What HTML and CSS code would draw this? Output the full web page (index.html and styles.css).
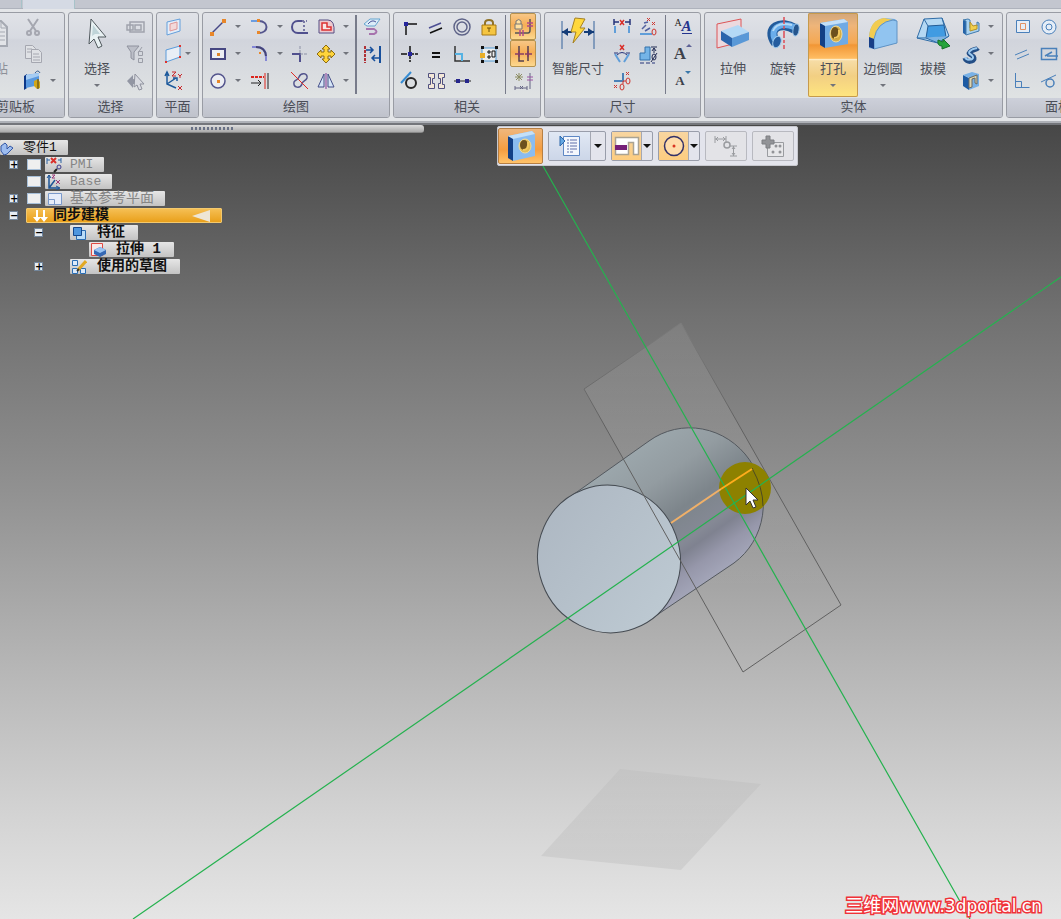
FILE: index.html
```html
<!DOCTYPE html>
<html lang="zh-CN">
<head>
	<meta charset="utf-8">
	<title>零件1</title>
	<link rel="stylesheet" href="styles.css">
</head>
<body>
<header class="ribbon">
	<div class="tabs"><span class="tab"></span><span class="tab current"></span></div>
	<div class="groups">
		<section class="group first">
			<div class="tools">
				<button class="big off"><svg width="34" height="34"><path d="M9 5h14l6 6v19H9z" fill="#e2e4e8" stroke="#a5a9b2" stroke-width="2"/><path d="M23 5v7h6M19 16h8M19 20h8M19 24h8" fill="none" stroke="#a5a9b2"/></svg><span>粘贴</span></button>
				<div class="grid">
					<button class="tool" aria-label="剪切"><svg width="24" height="24"><g fill="none" stroke="#a5a7b0" stroke-width="2"><path d="M7 4l8 12M17 4L9 16"/><circle cx="8" cy="18" r="2"/><circle cx="16" cy="18" r="2"/></g></svg></button>
					<button class="tool" aria-label="复制"><svg width="24" height="24"><g fill="#dfe1e5" stroke="#a5a7b0"><path d="M4.500 3.500h7l3 3v10h-10z"/><path d="M10.500 7.500h7l3 3v10h-10z"/><path d="M12 12h6M12 15h7M12 18h7M6 7h5M6 10h4"/></g></svg></button>
					<button class="tool drop" aria-label="格式"><svg width="24" height="24"><path d="M3 7l3-2v14l-3 2z" fill="#0c3788"/><path d="M5 6l13-2v12L5 19z" fill="#5898df"/><path d="M5 6l13-2v3L5 11z" fill="#a5ccf3"/><path d="M14 4q3-4 5 0" fill="none" stroke="#345d91"/><path d="M13 12l4-2 2 3v6l-3 1-3-3z" fill="#d3a719"/><path d="M17 10v10" stroke="#493f17"/></svg></button>
				</div>
			</div>
			<h2>剪贴板</h2>
		</section>
		<section class="group">
			<div class="tools">
				<button class="big"><svg width="34" height="34"><path d="M11 3l15 18-8 0 4 9-4 2-4-9-5 5z" fill="#e8f1f3" stroke="#50585d"/><path d="M13 9l7 9h-5l-3 2z" fill="#bfd4d8"/></svg><span>选择</span><i class="caret"></i></button>
				<div class="grid">
					<button class="tool" aria-label="选择框"><svg width="24" height="24"><g fill="none" stroke="#a0a3ad" stroke-width="1.500"><path d="M7 7h14v10H7z"/><path d="M4 10h6v5H4zM12 10h6v5h-6z"/></g></svg></button>
					<button class="tool" aria-label="过滤器"><svg width="24" height="24"><path d="M4 4h12l-5 6v8l-3-2v-6z" fill="#bcbfc8" stroke="#8f929e"/><path d="M19 5l-4 6M15.500 9.500h4v4h-4zM15.500 16.500h4v4h-4z" fill="none" stroke="#9a9da7"/></svg></button>
					<button class="tool" aria-label="反选"><svg width="24" height="24"><path d="M4 12l6-6v4c4 0 5 3 5 8-2-3-3-3-5-3v4z" fill="#9296a3"/><path d="M12 5l9 10h-4l2 5-3 1-2-5-3 2z" fill="#d9dbe1" stroke="#8f929e"/></svg></button>
				</div>
			</div>
			<h2>选择</h2>
		</section>
		<section class="group">
			<div class="tools">
				<div class="grid">
					<button class="tool" aria-label="平行平面"><svg width="24" height="24"><path d="M6 7l13-3v12L6 20z" fill="#e3edf9" stroke="#659fdb"/><path d="M9 9l7-2v7l-7 2z" fill="#f2d9da" stroke="#df9696"/></svg></button>
					<button class="tool drop snug" aria-label="三点平面"><svg width="24" height="24"><path d="M5 8l14-4v11L5 20z" fill="#e8eef6" stroke="#5b9bda"/><path d="M18 3h2v2h-2zM18 14h2v2h-2zM4 19h2v2H4z" fill="#e0322c"/></svg></button>
					<button class="tool" aria-label="坐标系"><svg width="24" height="24"><path d="M6 4v11l9 4M6 15l9-6M4 7l2-4 2 4M12 9h4v3" fill="none" stroke="#1e5a9c" stroke-width="1.500"/><path d="M11 3h4l-4 4h4M17 5l2 2 2-2M19 7v2M17 17l4 4M21 17l-4 4" fill="none" stroke="#c9292c"/></svg></button>
				</div>
			</div>
			<h2>平面</h2>
		</section>
		<section class="group">
			<div class="tools sketch">
				<div class="grid draw">
					<button class="tool drop" aria-label="直线"><svg width="24" height="24"><path d="M6 18L18 6" stroke="#474885" stroke-width="1.500"/><path d="M4 17h4v4H4zM16 4h4v4h-4z" fill="#e8872a"/></svg></button>
					<button class="tool drop" aria-label="圆弧"><svg width="24" height="24"><path d="M3 6h9" stroke="#6c9de0" stroke-width="2"/><path d="M11 6c10 0 10 12 0 12" fill="none" stroke="#54558d" stroke-width="2"/><path d="M9 4h3v3H9zM9 16h3v3H9z" fill="#e8872a"/></svg></button>
					<button class="tool" aria-label="修剪"><svg width="24" height="24"><path d="M20 18H10c-8 0-8-12 0-12h4" fill="none" stroke="#50508e" stroke-width="2"/><path d="M14 6h5M16 6v12" stroke="#7777a4" stroke-dasharray="2 2" stroke-width="2"/></svg></button>
					<button class="tool drop" aria-label="偏置"><svg width="24" height="24"><path d="M5 5h9q7 0 6 13H5z" fill="#edc9cf" stroke="#554e84"/><path d="M8 15V8h5v4h4v3z" fill="#f8e7e7" stroke="#dc3032" stroke-width="1.500"/></svg></button>
					<button class="tool drop" aria-label="矩形"><svg width="24" height="24"><path d="M5 7h14v10H5z" fill="#eceef3" stroke="#464782" stroke-width="2"/><path d="M11 11h3v3h-3z" fill="#dc852c"/></svg></button>
					<button class="tool drop" aria-label="圆角"><svg width="24" height="24"><path d="M4 5h4q10 0 10 10v4" fill="none" stroke="#8487d6" stroke-width="2"/><path d="M8 5q9 0 10 9" fill="none" stroke="#454577" stroke-width="2"/><path d="M11 10h2v2h-2z" fill="#e8872a"/></svg></button>
					<button class="tool" aria-label="延伸"><svg width="24" height="24"><path d="M4 12h8v8" fill="none" stroke="#50508e" stroke-width="2"/><path d="M12 4v8h8" fill="none" stroke="#8d91a6" stroke-dasharray="3 1"/></svg></button>
					<button class="tool drop" aria-label="移动"><svg width="24" height="24"><path d="M12 3l4 4h-2v3h3V8l4 4-4 4v-2h-3v3h2l-4 4-4-4h2v-3H7v2l-4-4 4-4v2h3V7H8z" fill="#ffd43b" stroke="#8b6b12"/></svg></button>
					<button class="tool drop" aria-label="圆"><svg width="24" height="24"><circle cx="12" cy="12" r="7" fill="#eceef3" stroke="#54558d" stroke-width="1.500"/><path d="M11 11h3v3h-3z" fill="#e8872a"/></svg></button>
					<button class="tool" aria-label="延伸到"><svg width="24" height="24"><path d="M3 8h13" stroke="#db251c" stroke-width="2" stroke-dasharray="3 1"/><path d="M3 14h10M10 11l3 3-3 3M20 4v16" fill="none" stroke="#222"/><path d="M17 4v16" stroke="#db251c"/></svg></button>
					<button class="tool" aria-label="分割"><svg width="24" height="24"><path d="M6 13c1-2 4-2 5-5 2-5 9-4 8 1-1 3-5 3-5 6-2 5-9 4-8-2z" fill="none" stroke="#54558d" stroke-width="1.500"/><path d="M3 3l17 17" stroke="#df2b27"/></svg></button>
					<button class="tool drop" aria-label="镜像"><svg width="24" height="24"><path d="M4 18h6V5zM20 18h-6V5z" fill="#d5e6f7" stroke="#434d88"/><path d="M12 4v16" stroke="#853899"/></svg></button>
				</div>
				<hr class="dark">
				<div class="grid">
					<button class="tool" aria-label="投影"><svg width="24" height="24"><path d="M4 9l6-5h10l-5 7H7z" fill="#dcecf8" stroke="#67a5cf"/><path d="M8 9q4-5 8-2" fill="none" stroke="#4b5599"/><path d="M6 14h8q5 3 0 5H9" fill="none" stroke="#a773ad" stroke-width="2"/></svg></button>
					<button class="tool" aria-label="间距"><svg width="24" height="24"><path d="M5 4v17" stroke="#b03137" stroke-width="2" stroke-dasharray="3 1"/><path d="M20 4v17" stroke="#174f9c" stroke-width="2"/><path d="M6 8h7M10 5l3 3-3 3M19 16h-7M15 13l-3 3 3 3" fill="none" stroke="#174f9c" stroke-width="1.500"/></svg></button>
				</div>
			</div>
			<h2>绘图</h2>
		</section>
		<section class="group">
			<div class="tools">
				<div class="grid relate">
					<button class="tool" aria-label="连接"><svg width="24" height="24"><path d="M8 20V9h11" fill="none" stroke="#111" stroke-width="1.500"/><path d="M6 7h4v4H6z" fill="#26269c"/></svg></button>
					<button class="tool" aria-label="平行"><svg width="24" height="24"><path d="M5 13l12-5" stroke="#4c4e93" stroke-width="1.500"/><path d="M6 18l12-5" stroke="#111" stroke-width="1.500"/></svg></button>
					<button class="tool" aria-label="同心"><svg width="24" height="24"><g fill="none" stroke="#5f6488" stroke-width="1.500"><circle cx="12" cy="12" r="8"/><circle cx="12" cy="12" r="5"/></g></svg></button>
					<button class="tool" aria-label="锁定"><svg width="24" height="24"><path d="M9 11V8q0-3 4-3t4 3v3" fill="none" stroke="#917328" stroke-width="2"/><path d="M6 10h14v10H6z" fill="#f5c541" stroke="#a57817"/><path d="M13 13v4M11 13h4" stroke="#6f5008"/></svg></button>
					<button class="tool" aria-label="水平/竖直"><svg width="24" height="24"><path d="M3 12h17M12 4v16" stroke="#111" stroke-width="1.500" stroke-dasharray="6 1"/><path d="M10 10h4v4h-4z" fill="#26269c"/></svg></button>
					<button class="tool" aria-label="相等"><svg width="24" height="24"><path d="M8 11h8M8 15h8" stroke="#111" stroke-width="2"/></svg></button>
					<button class="tool" aria-label="垂直"><svg width="24" height="24"><path d="M5 4v15h15" fill="none" stroke="#333" stroke-width="1.500"/><path d="M5 12h7v7" fill="none" stroke="#55b2e3" stroke-width="2"/></svg></button>
					<button class="tool" aria-label="刚性组"><svg width="24" height="24"><path d="M6 6h14v13H6z" fill="#eee" stroke="#519bd6"/><path d="M5 4h3v3H5zM19 4h3v3h-3zM5 18h3v3H5zM19 18h3v3h-3z" fill="#111"/><path d="M12 9h2v2h-2zM16 9h3v6h-3zM12 14h2v2h-2z" fill="none" stroke="#111"/><path d="M4 11h5v5H4z" fill="#e9ae28"/></svg></button>
					<button class="tool" aria-label="相切"><svg width="24" height="24"><path d="M3 14L13 3" stroke="#368cd3" stroke-width="2"/><circle cx="13" cy="14" r="5" fill="none" stroke="#282828" stroke-width="2"/></svg></button>
					<button class="tool" aria-label="对称"><svg width="24" height="24"><path d="M4.500 4.500h6v5h-2v5h2v5h-6v-4h2v-7h-2zM20.500 4.500h-6v5h2v5h-2v5h6v-4h-2v-7h2z" fill="#f3e7d7" stroke="#50517f"/></svg></button>
					<button class="tool" aria-label="共线"><svg width="24" height="24"><path d="M4 12h17" stroke="#222"/><path d="M6 10h4v4H6zM15 10h4v4h-4z" fill="#26268c"/></svg></button>
				</div>
				<hr>
				<div class="grid">
					<button class="tool on" aria-label="保持关系"><svg width="24" height="24"><path d="M4 9h7v5H4zM5 9V6q3-3 5 0v3" fill="#ffe09f" stroke="#777"/><path d="M4 18h13q2 0 2-3V4" fill="none" stroke="#555" stroke-width="1.500"/><path d="M16 8h6M16 11h6M9 15v6M12 15v6" stroke="#b14b88" stroke-width="1.500"/></svg></button>
					<button class="tool on" aria-label="关系手柄"><svg width="24" height="24"><path d="M8 4v15h5M17 4v15" fill="none" stroke="#54404d" stroke-width="1.500"/><path d="M4 12h9M14 12h7M8 9v6M17 9v6" stroke="#863e66" stroke-width="1.500"/></svg></button>
					<button class="tool" aria-label="关系颜色"><svg width="24" height="24"><path d="M4 8h8M8 4v8M5 5l6 6M11 5l-6 6" stroke="#8c8d62"/><path d="M4 19h12M4 17v4M16 17v4M9 17l3 3M12 17l-3 3M19 4v16" stroke="#646584"/><path d="M16 8h6M16 11h6" stroke="#9b55a2"/></svg></button>
				</div>
			</div>
			<h2>相关</h2>
		</section>
		<section class="group">
			<div class="tools measure">
				<button class="big wide"><svg width="34" height="34"><path d="M1 5v28M33 5v28" stroke="#34639b"/><path d="M1 16h10M23 16h10" stroke="#153d78" stroke-width="2"/><path d="M1 16l6-4v8zM33 16l-6-4v8z" fill="#153d78"/><path d="M14 2l10 1-5 9h5L12 27l3-11h-5z" fill="#ffd83d" stroke="#a58123"/></svg><span>智能尺寸</span></button>
				<div class="grid dims">
					<button class="tool" aria-label="间距尺寸"><svg width="24" height="24"><path d="M4 4v6M20 4v6M4 7h5M15 7h5" stroke="#27347a" stroke-width="1.500"/><path d="M10 5l4 5M14 5l-4 5" stroke="#d9302b" stroke-width="1.500"/><path d="M5 11v7M19 11v7" stroke="#609ed9" stroke-width="2"/></svg></button>
					<button class="tool" aria-label="坐标尺寸"><svg width="24" height="24"><path d="M4 19h12" stroke="#609ed9" stroke-width="2"/><path d="M6 14l4-4M9 16l5-3M8 8l4-1" stroke="#5362a0" stroke-width="1.500"/><path d="M11 3l3 3M14 3l-3 3M16 7l3 3M19 7l-3 3" stroke="#cf3731"/><ellipse cx="18" cy="17" rx="2" ry="3" fill="none" stroke="#cf3731"/></svg></button>
					<button class="tool" aria-label="角度尺寸"><svg width="24" height="24"><path d="M10 3l4 5M14 3l-4 5" stroke="#d9302b" stroke-width="1.500"/><path d="M5 12l5 8M19 12l-5 8" stroke="#609ed9" stroke-width="2"/><path d="M4 11h4M16 11h4M7 13q5-5 10 0" fill="none" stroke="#27347a"/></svg></button>
					<button class="tool" aria-label="对称直径"><svg width="24" height="24"><path d="M4 11h5V5h5v13H4z" fill="#74b4e7" stroke="#3270ab"/><path d="M4 21h15" stroke="#27347a" stroke-dasharray="4 2"/><path d="M15 5h6M18 6v5M16 9l2-3 2 3M15 20l6-9" fill="none" stroke="#222c55"/><ellipse cx="18" cy="15" rx="2" ry="3" fill="none" stroke="#222c55"/></svg></button>
					<button class="tool" aria-label="尺寸轴"><svg width="24" height="24"><path d="M4 12h9V4" fill="none" stroke="#4a81b8" stroke-width="2"/><path d="M13 12v3M13 12h3" stroke="#cf3731"/><path d="M16 3l3 3M19 3l-3 3M4 16l3 3M7 16l-3 3" stroke="#cf3731"/><ellipse cx="18" cy="12" rx="2" ry="3" fill="none" stroke="#cf3731"/><ellipse cx="12" cy="18" rx="2" ry="3" fill="none" stroke="#cf3731"/></svg></button>
				</div>
				<hr>
				<div class="grid">
					<button class="tool letter" aria-label="文字样式"><sup>A</sup><em>A</em></button>
					<button class="tool letter" aria-label="增大字体"><b>A</b><i class="grow"></i></button>
					<button class="tool letter small" aria-label="减小字体"><b>A</b><i class="shrink"></i></button>
				</div>
			</div>
			<h2>尺寸</h2>
		</section>
		<section class="group">
			<div class="tools">
				<button class="big"><svg width="34" height="34"><path d="M1 8l24-5v23L1 32z" fill="#ecd9de" stroke="#dd5456"/><path d="M5 15l17-6 11 7-17 6z" fill="#b4d9f6"/><path d="M5 15l11 7v9L5 24z" fill="#2a65ad"/><path d="M16 22l17-6v8l-17 7z" fill="#5998d7"/></svg><span>拉伸</span></button>
				<button class="big"><svg width="34" height="34"><path d="M10 27C-1 12 15 4 29 13" fill="none" stroke="#225b9b" stroke-width="10"/><path d="M9 24C3 11 16 6 28 11" fill="none" stroke="#6aadeb" stroke-width="6"/><path d="M7 15C10 7 18 7 26 9" fill="none" stroke="#b4d9f6" stroke-width="2"/><ellipse cx="11" cy="26" rx="4" ry="6" fill="#235c9f" stroke="#a2cced" transform="rotate(20 11 26)"/><ellipse cx="30" cy="14" rx="3" ry="6" fill="#25558d" stroke="#91c0e9" transform="rotate(10 30 14)"/><path d="M18 1v32" stroke="#dd4b54" stroke-width="1.500" stroke-dasharray="7 2 3 2"/></svg><span>旋转</span></button>
				<button class="big on"><svg width="34" height="34"><path d="M4 7l5 2v23l-5-3z" fill="#123f85"/><path d="M4 7l24-4 4 3v22L9 32V9z" fill="#70aae4"/><path d="M4 7l24-4 4 3L9 10z" fill="#c4e0f8"/><ellipse cx="20" cy="18" rx="6" ry="8" fill="#d4ac43" stroke="#f2dc99"/><ellipse cx="19" cy="17" rx="4" ry="6" fill="#6c511e"/><path d="M18 22q6 0 5-8" fill="none" stroke="#f4cb62" stroke-width="2"/></svg><span>打孔</span><i class="caret"></i></button>
				<button class="big"><svg width="34" height="34"><path d="M3 32V20Q5 4 18 2l11 1 2 2v22L8 33z" fill="#76ade3"/><path d="M3 21Q4 4 18 2l9 2Q11 6 8 23z" fill="#f2cc51"/><path d="M8 33V23Q11 6 27 4l4 1v22z" fill="#91c4f0" stroke="#6093c4"/><path d="M3 21l5 2v10l-5-2z" fill="#173e87"/></svg><span>边倒圆</span><i class="caret"></i></button>
				<button class="big"><svg width="34" height="34"><path d="M8 3l18-1 7 18-11 7L1 22z" fill="#b4d8f3" stroke="#306ca6"/><path d="M12 10l16-1 2 12-20 1z" fill="#419be2" stroke="#235c96"/><path d="M1 22l9 0 12 5 11-7" fill="#7fb4e2" stroke="#306ca6"/><path d="M8 3l4 7M26 2l2 7" fill="none" stroke="#306ca6"/><path d="M22 24l5 2v-3l7 7-8 3v-3q-5 0-4-6z" fill="#25a33b" stroke="#176f29"/></svg><span>拔模</span></button>
				<div class="grid">
					<button class="tool drop" aria-label="肋板"><svg width="24" height="24"><path d="M4 5l3 1v14l-3-2z" fill="#2463a8"/><path d="M4 5l5-1 2 1v8l7-2V7l2 1v8L7 20V6z" fill="#a8d2f1" stroke="#427bad"/><path d="M11 12V7l3 4 4-1v4l-7 2z" fill="#f2cf4c" stroke="#b3922a"/></svg></button>
					<button class="tool drop" aria-label="扫掠"><svg width="24" height="24"><path d="M6 16c1 5 10 4 9 0s-7-3-4-6 6-2 8-4" fill="none" stroke="#234e86" stroke-width="5"/><path d="M6 15c1 4 9 3 8 0s-6-3-3-6 5-2 7-3" fill="none" stroke="#9ccaf0" stroke-width="2"/></svg></button>
					<button class="tool drop" aria-label="薄壁"><svg width="24" height="24"><path d="M4 6l6 3v12l-6-4z" fill="#1c5ba3"/><path d="M4 6l9-3 7 2v12l-10 4V9z" fill="#78b1e6"/><path d="M10 9l8-3v9l-2-1V9l-3 1v8l-3 1z" fill="#ddd4af" stroke="#6d6b61"/></svg></button>
				</div>
			</div>
			<h2>实体</h2>
		</section>
		<section class="group last">
			<div class="tools">
				<div class="grid dims">
					<button class="tool" aria-label="共面"><svg width="24" height="24"><path d="M5.500 5.500h13v12h-13z" fill="#e5edf7" stroke="#4a80ba"/><path d="M9.500 8.500h5v6h-5z" fill="none" stroke="#e19164"/></svg></button>
					<button class="tool" aria-label="同轴"><svg width="24" height="24"><g fill="#e5edf7" stroke="#4a80ba"><circle cx="12" cy="12" r="7"/><circle cx="12" cy="12" r="3"/></g></svg></button>
					<button class="tool" aria-label="面平行"><svg width="24" height="24"><path d="M4 13l12-5M6 17l12-5" stroke="#4a80ba"/></svg></button>
					<button class="tool" aria-label="面相等"><svg width="24" height="24"><path d="M4.500 6.500h15v11h-15zM8 14l7-4M10 14h11" fill="none" stroke="#4a80ba" stroke-width="1.500"/></svg></button>
					<button class="tool" aria-label="面垂直"><svg width="24" height="24"><path d="M4.500 4v14.500h14M4.500 12.500h6v6" fill="none" stroke="#4a80ba"/></svg></button>
					<button class="tool" aria-label="面相切"><svg width="24" height="24"><path d="M4 13l15-7" stroke="#4a80ba"/><circle cx="13" cy="14" r="4" fill="none" stroke="#4a80ba" stroke-width="1.500"/></svg></button>
				</div>
			</div>
			<h2>面相关</h2>
		</section>
	</div>
</header>
<main class="view">
	<svg class="scene" viewBox="0 125 1061 794" preserveAspectRatio="xMidYMin slice">
		<defs>
			<linearGradient id="body" gradientUnits="userSpaceOnUse" x1="608" y1="470" x2="692" y2="590">
				<stop offset="0" stop-color="#9ba6ab"/>
				<stop offset=".25" stop-color="#939ca1"/>
				<stop offset=".5" stop-color="#7d858b"/>
				<stop offset=".7" stop-color="#858995"/>
				<stop offset=".76" stop-color="#7f8290"/>
				<stop offset=".88" stop-color="#9697aa"/>
				<stop offset="1" stop-color="#a2a4b7"/>
			</linearGradient>
			<linearGradient id="face" x1="0" y1="0" x2=".6" y2="1">
				<stop offset="0" stop-color="#acb6c1"/>
				<stop offset="1" stop-color="#bcc8d1"/>
			</linearGradient>
			<linearGradient id="edge" gradientUnits="userSpaceOnUse" x1="0" y1="323" x2="0" y2="430">
				<stop offset="0" stop-color="#7c7c7c"/>
				<stop offset="1" stop-color="#606060"/>
			</linearGradient>
			<linearGradient id="sheet" gradientUnits="userSpaceOnUse" x1="0" y1="323" x2="0" y2="600">
				<stop offset="0" stop-color="#fff" stop-opacity=".09"/>
				<stop offset="1" stop-color="#fff" stop-opacity="0"/>
			</linearGradient>
			<linearGradient id="shade" x1="0" y1="0" x2="0" y2="1">
				<stop offset="0" stop-color="#000" stop-opacity=".03"/>
				<stop offset="1" stop-color="#000" stop-opacity=".06"/>
			</linearGradient>
		</defs>
		<!-- ground shadow -->
		<path d="M620 769l141 15-80 86-140-14z" fill="url(#shade)"/>
		<path d="M681 323l160 282-98 67-159-283z" fill="url(#sheet)"/>
		<!-- cylinder -->
		<path d="M567 499L649 441A71 74 -20 0 1 734 563L651 619z" fill="url(#body)"/>
		<path d="M567 499L649 441A71 74 -20 0 1 734 563L651 619" fill="none" stroke="#54595f"/>
		<ellipse cx="609" cy="559" rx="71" ry="74" transform="rotate(-20 609 559)" fill="url(#face)" stroke="#454b52"/>
		<path d="M681 323l160 282-98 67-159-283z" fill="none" stroke="url(#edge)"/>
		<circle cx="745" cy="488" r="26" fill="#8d8100"/>
		<path d="M752 468q11 20 11 38" fill="none" stroke="#4c4a22"/>
		<path d="M543 166L970 919M1061 277L133 919" stroke="#25b24f" stroke-width="1.200"/>
		<path d="M671 523l50-34" stroke="#f0b068" stroke-width="2"/>
		<path d="M721 489l31-20" stroke="#ffac1c" stroke-width="2"/>
		<path d="M746 488v17l4-4 3 7 3-1-3-7h5z" fill="#fff" stroke="#333"/>
	</svg>
	<div class="splitter"><i></i></div>
	<ul class="tree">
		<li class="row root"><span class="label"><svg width="16" height="16"><path d="M1 6l4-3 2 2v4l3-3 3 2-6 6-3 1-3-4z" fill="#9dbdf0" stroke="#3457a4"/></svg>零件1</span></li>
		<li class="row"><button class="fold" aria-label="展开">+</button><input type="checkbox" aria-label="PMI"><span class="label grey latin"><svg width="16" height="16"><path d="M1 1v6M15 1v5M1 3h3M12 3h3" stroke="#2c64a4"/><path d="M5 1l5 5M10 1L5 6" stroke="#d9302b" stroke-width="2"/><circle cx="13" cy="10" r="2" fill="none" stroke="#3a3b8c"/><path d="M8 15l3-3" stroke="#222" stroke-width="2"/></svg>PMI</span></li>
		<li class="row"><i class="fold none"></i><input type="checkbox" aria-label="Base"><span class="label grey latin"><svg width="16" height="16"><path d="M3 1v13h10M3 14l6-8" fill="none" stroke="#1d5496" stroke-width="1.500"/><path d="M1 4l2-3 2 3M10 12l4 2-4 2" fill="none" stroke="#1d5496"/><path d="M6 1h3L6 4h3M10 6l4 4M14 6l-4 4" fill="none" stroke="#9b3a78"/></svg>Base</span></li>
		<li class="row"><button class="fold" aria-label="展开">+</button><input type="checkbox" aria-label="基本参考平面"><span class="label grey"><svg width="16" height="16"><path d="M2.500 2.500h13v11h-13zM2.500 8.500h6v5" fill="#e6edfa" stroke="#7b9acb"/></svg>基本参考平面</span></li>
		<li class="row"><button class="fold" aria-label="折叠">−</button><span class="label sync"><svg width="16" height="16"><path d="M5 2v9M12 2v9" stroke="#fff" stroke-width="2"/><path d="M1 9h8l-4 5zM8 9h8l-4 5z" fill="#fff"/></svg>同步建模<i class="arrow"></i></span></li>
		<li class="row sub"><button class="fold" aria-label="折叠">−</button><span class="label strong"><svg width="16" height="16"><path d="M5.500 5.500h9v9h-9z" fill="#b9dcf8" stroke="#2c6db2"/><path d="M2.500 2.500h8v8h-8z" fill="#4d96df" stroke="#14478e"/></svg>特征</span></li>
		<li class="row leaf"><span class="label strong"><svg width="16" height="16"><path d="M1.500 1.500h11v12h-11z" fill="#f8e8e8" stroke="#e04a43"/><path d="M4 8l6-3 6 3v4l-6 3-6-3z" fill="#3468b4"/><path d="M4 8l6-3 6 3-6 3z" fill="#99c3f2"/></svg>拉伸 1</span></li>
		<li class="row sub"><button class="fold" aria-label="展开">+</button><span class="label strong"><svg width="16" height="16"><path d="M1.500 1.500h5v5h-5zM1.500 9.500h5v5h-5zM9.500 9.500h5v5h-5z" fill="#dceafa" stroke="#2a6eb5"/><path d="M7 11l8-9" stroke="#e2a923" stroke-width="3"/><path d="M6 12l2-2" stroke="#333" stroke-width="2"/></svg>使用的草图</span></li>
	</ul>
	<div class="command">
		<button class="hole" aria-label="打孔"><svg width="34" height="34"><path d="M4 7l5 2v23l-5-3z" fill="#123f85"/><path d="M4 7l24-5 3 3v22L9 32V9z" fill="#8abcf0"/><path d="M4 7l24-5 3 3L9 10z" fill="#c4e0f8"/><ellipse cx="21" cy="17" rx="6" ry="7" fill="#e1bd59" stroke="#f2dc99"/><ellipse cx="20" cy="16" rx="4" ry="5" fill="#6c511e"/><path d="M19 21q6 0 5-8" fill="none" stroke="#f4cb62" stroke-width="2"/></svg></button>
		<button class="split options" aria-label="选项"><span><svg width="24" height="24"><path d="M5.500 2.500h16v19h-16z" fill="#f4f7fd" stroke="#5d87c4"/><path d="M2 2l5 5-5 5z" fill="#64a7e3" stroke="#2d66a8"/><path d="M9 6h10M9 9h10M9 12h10M9 15h10M9 18h6" stroke="#5e6fa9" stroke-dasharray="2 1 9 0"/></svg></span><i class="caret"></i></button>
		<button class="split warm" aria-label="范围"><span><svg width="26" height="24"><path d="M1.500 3.500h23v17h-5v-12h-5v12h-13z" fill="#fff" stroke="#aaa393" stroke-width="1.500"/><path d="M1 11h12v5H1z" fill="#762078"/></svg></span><i class="caret"></i></button>
		<button class="split warm" aria-label="孔型"><span><svg width="24" height="24"><circle cx="12" cy="12" r="9.500" fill="#ffdcaa" stroke="#333168" stroke-width="1.500"/><circle cx="12" cy="12" r="1.500" fill="#da3522"/></svg></span><i class="caret"></i></button>
		<button class="plain" aria-label="尺寸" disabled><svg width="28" height="24"><g fill="none" stroke="#9a9ca0"><path d="M3 2v7M14 2v7M3 5h11M6 3L4 5l2 2M11 3l2 2-2 2M18 12h7M18 22h7M21.500 12v10M20 15l1.500-2 1.500 2M20 19l1.500 2 1.500-2"/><circle cx="15" cy="11" r="3" stroke-width="1.500"/></g></svg></button>
		<button class="plain" aria-label="阵列" disabled><svg width="28" height="24"><path d="M8.500 8.500h16v14h-16z" fill="#e7e7e9" stroke="#9a9ca0"/><path d="M3 6h4V2h4v4h4v4h-4v4H7v-4H3z" fill="#929397" stroke="#7d7e82"/><g fill="#929397"><circle cx="17" cy="12" r="1.500"/><circle cx="21" cy="12" r="1.500"/><circle cx="21" cy="18" r="1.500"/><circle cx="14" cy="18" r="1.500"/></g></svg></button>
	</div>
	<p class="site">三维网<b>www.3dportal.cn</b></p>
</main>
</body>
</html>
```
FILE: styles.css
```css
*{
	margin:0;
	padding:0;
	box-sizing:border-box;
	list-style:none;
}
body{
	height:100vh;
	display:flex;
	flex-direction:column;
	overflow:hidden;
	font-family:"Liberation Sans","Noto Sans CJK SC",sans-serif;
	font-size:13px;
	color:#4b4e57;
}
button{
	font:inherit;
	color:inherit;
	background:none;
	border:0;
}
svg{
	display:block;
	flex:none;
}

/* ribbon */
.ribbon{
	flex:none;
	background:#dadde2;
	border-bottom:2px solid #74767b;
	overflow:hidden;
}
.tabs{
	display:flex;
	gap:1px;
	height:9px;
	background:#c3c6cf;
	border-bottom:1px solid #aeb2bc;
}
.tab{
	width:22px;
	border-right:1px solid #a7c3c9;
}
.tab.current{
	width:52px;
	height:9px;
	background:#d5dae4;
}
.groups{
	display:flex;
	gap:3px;
	padding:3px 0;
	border-bottom:2px solid #aeb1b7;
	background:#e3e5e8;
}
.group{
	flex:none;
	border:1px solid #999ca4;
	border-radius:3px;
	background:linear-gradient(#e0e2e7,#d7dae1 24%,#d1d4dc 26%,#dfe2e3 80%);
	overflow:hidden;
}
.group.first{
	margin-left:-34px;
}
.group.last{
	flex:1 0 117px;
}
.group h2{
	height:19px;
	line-height:18px;
	font-size:13px;
	font-weight:normal;
	text-align:center;
	background:linear-gradient(#cdd0da,#bfc2cb);
}
.tools{
	display:flex;
	height:85px;
	padding:0 4px 0 3px;
}
.tools.sketch,.tools.measure{
	padding-left:2px;
}
.grid{
	display:grid;
	grid-auto-rows:27px;
}
.draw{
	grid-template-columns:42px 40px 26px 40px;
}
.relate{
	grid-template-columns:repeat(4,26px);
}
.dims{
	grid-template-columns:26px 26px;
	justify-content:start;
}
.tools hr{
	width:1px;
	height:79px;
	margin:2px 4px 0;
	border:0;
	background:#777b8a;
}
.tools hr.dark{
	width:2px;
	margin:2px 2px 0;
}
.tool{
	width:26px;
	display:flex;
	align-items:center;
	padding:0 1px;
}
.tool.drop{
	width:40px;
}
.tool.drop::after,.caret{
	content:"";
	flex:none;
	border:3px solid transparent;
	border-top-color:#71747c;
	border-bottom-width:0;
}
.tool.drop::after{
	margin-left:5px;
}
.tool.snug{
	width:34px;
}
.tool.snug::after{
	margin-left:0;
}
.tool.on{
	border:1px solid #b5924e;
	border-radius:2px;
	background:linear-gradient(#f8c786,#f6ae56 45%,#fcd88f);
}
.tool.on svg{
	margin:0 -1px;
}
.big{
	width:50px;
	height:84px;
	display:flex;
	flex-direction:column;
	align-items:center;
	padding-top:3px;
	border-radius:2px;
}
.big span{
	margin-top:10px;
	line-height:18px;
	white-space:nowrap;
}
.big .caret{
	margin-top:6px;
}
.big.off{
	color:#8d9098;
}
.big.wide{
	width:62px;
}
.big.on{
	background:linear-gradient(#d2a67a,#eeb57a 15%,#f5a852 36%,#f19635 38%,#ffbd62 54%,#fff0cc 55%,#f6dca5 57%,#f2cf83 75%,#ffe67f);
	box-shadow:inset 0 0 0 1px #c69a4c;
}
.letter{
	justify-content:center;
	font-family:"Liberation Serif",serif;
	font-size:17px;
	color:#3d414a;
}
.letter sup{
	font-size:10px;
	line-height:10px;
	color:#222;
	align-self:flex-start;
	margin-top:5px;
}
.letter em{
	font-size:15px;
	line-height:14px;
	font-weight:bold;
	color:#24348d;
	border-bottom:1px solid #24348d;
}
.letter.small{
	font-size:13px;
}
.grow,.shrink{
	border:3px solid transparent;
	align-self:flex-start;
	margin-top:4px;
}
.grow{
	border-bottom-color:#5e6296;
	border-top:0;
}
.shrink{
	border-top-color:#3b78aa;
	border-bottom:0;
}

/* model view */
.view{
	flex:1;
	position:relative;
	overflow:hidden;
	background:linear-gradient(#474747,#717171 24%,#919191 46%,#b7b7b7 69%,#d2d2d2 86%,#e5e5e5);
}
.scene{
	position:absolute;
	left:0;
	top:0;
	width:100%;
	height:100%;
}
.splitter{
	position:relative;
	width:40%;
	height:8px;
	display:flex;
	align-items:center;
	justify-content:center;
	border-radius:0 3px 3px 0;
	background:linear-gradient(#ddd,#aaa);
	border-bottom:1px solid #888;
}
.splitter i{
	width:42px;
	height:3px;
	background:repeating-linear-gradient(90deg,#697185 0 2px,transparent 2px 4px);
}
.tree{
	position:relative;
	width:222px;
	padding-top:6px;
	font-family:"Liberation Mono","Noto Sans CJK SC",monospace;
	font-size:14px;
	color:#111;
}
.row{
	height:17px;
	display:flex;
	align-items:center;
	padding-left:9px;
}
.row.root{
	padding-left:0;
	font-size:13px;
}
.row.sub{
	padding-left:34px;
}
.row.leaf{
	padding-left:89px;
}
.fold{
	width:9px;
	height:9px;
	flex:none;
	margin-right:8px;
	font-family:"DejaVu Sans",sans-serif;
	font-size:10px;
	font-weight:bold;
	line-height:8px;
	text-align:center;
	color:#000;
	background:#e6ecf2;
	border:1px solid #73869b;
	line-height:7px;
}
.fold.none{
	background:none;
	border:0;
}
.sub .fold{
	margin-right:27px;
}
.row input{
	appearance:none;
	width:14px;
	height:11px;
	margin:0 4px 0 1px;
	border:1px solid #a7bfd8;
	background:#efefef;
}
.label{
	height:15px;
	display:flex;
	align-items:center;
	line-height:15px;
	padding:0 11px 0 1px;
	border-radius:1px;
	white-space:nowrap;
	background:linear-gradient(#e6e6e6,#c3c3c3);
}
.label svg{
	margin-right:8px;
}
.root .label{
	padding-left:0;
}
.root svg{
	margin-right:7px;
}
.grey{
	color:#858585;
}
.latin{
	font-size:13px;
}
.strong{
	font-weight:bold;
	padding-right:13px;
}
.strong svg{
	margin-right:10px;
}
.sync{
	flex:1;
	font-weight:bold;
	padding-left:5px;
	background:linear-gradient(#f5bf54,#e9a01b);
	border:1px solid #f3c96e;
}
.sync svg{
	margin-right:5px;
}
.arrow{
	margin-left:auto;
	border:6px solid transparent;
	border-right:18px solid #eee6d6;
	border-left:0;
}

/* command bar floats over the model */
.command{
	position:absolute;
	left:497px;
	top:1px;
	display:flex;
	align-items:center;
	gap:5px;
	padding:1px 3px 1px 0;
	border:1px solid #c7c8ce;
	border-radius:2px;
	background:#e3e4ec;
}
.command button{
	height:30px;
	display:flex;
	align-items:center;
	justify-content:center;
	border:1px solid #999daa;
	border-radius:2px;
}
.command .hole{
	width:45px;
	height:36px;
	border-color:#b77f43;
	background:linear-gradient(#efb77d,#f59d40 60%,#ffc36a);
}
.command .split{
	width:42px;
}
.command .options{
	width:58px;
}
.split span{
	flex:1;
	height:28px;
	display:flex;
	align-items:center;
	justify-content:center;
	border-right:1px solid #a5a8b3;
	background:linear-gradient(#e1e8f4,#ccd6e8);
}
.warm span{
	background:linear-gradient(#f8d5a0,#fdcd80);
}
.split .caret{
	border-width:4px;
	border-bottom-width:0;
	border-top-color:#111;
	margin:0 1px;
}
.options .caret{
	margin:0 3px;
}
.command .plain{
	width:42px;
	border-color:#b8b9c0;
	background:#e3e3e7;
}
.site{
	position:absolute;
	right:19px;
	bottom:3px;
	font-family:"Noto Sans CJK SC",sans-serif;
	font-size:18px;
	line-height:20px;
	color:#fff;
	-webkit-text-stroke:3px #f03238;
	paint-order:stroke fill;
}
.site b{
	font-family:"DejaVu Sans",sans-serif;
	font-size:17px;
	font-weight:normal;
}
```
